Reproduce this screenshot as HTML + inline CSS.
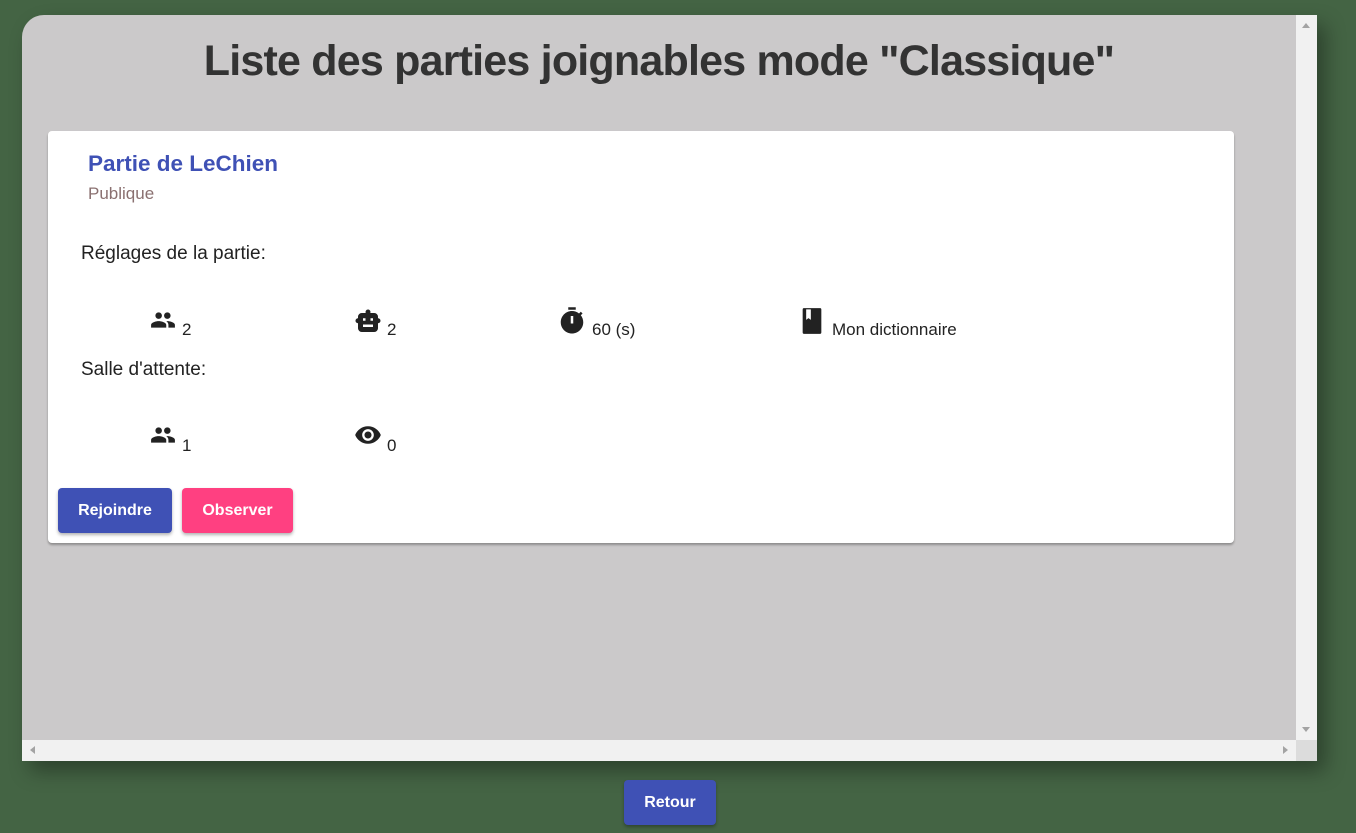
<!DOCTYPE html>
<html><head><meta charset="utf-8"><style>
*{box-sizing:border-box;margin:0;padding:0}
body{width:1356px;height:833px;background:#446444;font-family:"Liberation Sans",Roboto,sans-serif;position:relative;overflow:hidden}
.panel{position:absolute;left:22px;top:15px;width:1295px;height:746px;background:#cbc9ca;border-radius:22px 0 0 0;box-shadow:8px 10px 20px rgba(0,0,0,.35);overflow:hidden}
.vs{position:absolute;right:0;top:0;width:21px;height:725px;background:#f1f1f1}
.hs{position:absolute;left:0;bottom:0;width:1274px;height:21px;background:#f1f1f1}
.corner{position:absolute;right:0;bottom:0;width:21px;height:21px;background:#dcdcdc}
.tri{position:absolute;width:0;height:0}
h1{position:absolute;left:0;width:1274px;top:22px;text-align:center;font-size:43px;font-weight:bold;color:#333;letter-spacing:-0.8px}
.card{position:absolute;left:26px;top:116px;width:1186px;height:412px;background:#fff;border-radius:4px;box-shadow:0 2px 2px rgba(0,0,0,.3)}
.t{position:absolute;white-space:nowrap;color:#222}
.btn{position:absolute;height:45px;border-radius:4px;color:#fff;font-weight:bold;font-size:16px;display:flex;align-items:center;justify-content:center;box-shadow:0 2px 3px rgba(0,0,0,.3)}
svg{position:absolute}
</style></head><body>
<div class="panel">
<h1>Liste des parties joignables mode "Classique"</h1>
<div class="card">
<div class="t" style="left:40px;top:20px;font-size:22.5px;font-weight:bold;color:#3f51b5">Partie de LeChien</div>
<div class="t" style="left:40px;top:53px;font-size:17px;color:#8a7070">Publique</div>
<div class="t" style="left:33px;top:112px;font-size:19px">Réglages de la partie:</div>
<svg style="left:99px;top:176px" width="32" height="26" viewBox="0 0 24 24"><path fill="#222" d="M16 11c1.66 0 2.99-1.34 2.99-3S17.66 5 16 5c-1.66 0-3 1.34-3 3s1.34 3 3 3zm-8 0c1.66 0 2.99-1.34 2.99-3S9.66 5 8 5C6.34 5 5 6.34 5 8s1.34 3 3 3zm0 2c-2.33 0-7 1.17-7 3.5V19h14v-2.5c0-2.33-4.67-3.5-7-3.5zm8 0c-.29 0-.62.02-.97.05 1.16.84 1.97 1.97 1.97 3.45V19h6v-2.5c0-2.33-4.67-3.5-7-3.5z"/></svg>
<div class="t" style="left:134px;top:189px;font-size:17px">2</div>
<svg style="left:305px;top:176px" width="30" height="30" viewBox="0 0 24 24"><path fill="#222" d="M12 2a2 2 0 0 1 2 2c0 .3-.1.5-.2.8H17a3 3 0 0 1 3 3V9a2 2 0 0 1 0 4v4a3 3 0 0 1-3 3H7a3 3 0 0 1-3-3v-4a2 2 0 0 1 0-4V7.8a3 3 0 0 1 3-3h3.2A2 2 0 0 1 12 2zM8 9v2h2V9zm6 0v2h2V9zM8 14v2h8v-2z"/></svg>
<div class="t" style="left:339px;top:189px;font-size:17px">2</div>
<svg style="left:509px;top:175px" width="30" height="30" viewBox="0 0 24 24"><path fill="#222" d="M15 1H9v2h6V1zm4.03 6.39l1.42-1.42c-.43-.51-.9-.99-1.41-1.41l-1.42 1.42A8.96 8.96 0 0 0 12 4c-4.97 0-9 4.03-9 9s4.02 9 9 9 9-4.03 9-9c0-2.12-.74-4.07-1.97-5.61zM13 14h-2V8h2v6z"/></svg>
<div class="t" style="left:544px;top:189px;font-size:17px">60 (s)</div>
<svg style="left:752px;top:176px" width="24" height="28" viewBox="0 0 20 24"><path fill="#222" d="M3 1h14a1 1 0 0 1 1 1v20a1 1 0 0 1-1 1H3a1 1 0 0 1-1-1V2a1 1 0 0 1 1-1zm2 1v9l2-1.5 2 1.5V2z"/></svg>
<div class="t" style="left:784px;top:189px;font-size:17px">Mon dictionnaire</div>
<div class="t" style="left:33px;top:228px;font-size:19px">Salle d'attente:</div>
<svg style="left:99px;top:291px" width="32" height="26" viewBox="0 0 24 24"><path fill="#222" d="M16 11c1.66 0 2.99-1.34 2.99-3S17.66 5 16 5c-1.66 0-3 1.34-3 3s1.34 3 3 3zm-8 0c1.66 0 2.99-1.34 2.99-3S9.66 5 8 5C6.34 5 5 6.34 5 8s1.34 3 3 3zm0 2c-2.33 0-7 1.17-7 3.5V19h14v-2.5c0-2.33-4.67-3.5-7-3.5zm8 0c-.29 0-.62.02-.97.05 1.16.84 1.97 1.97 1.97 3.45V19h6v-2.5c0-2.33-4.67-3.5-7-3.5z"/></svg>
<div class="t" style="left:134px;top:305px;font-size:17px">1</div>
<svg style="left:304px;top:290px" width="32" height="28" viewBox="0 0 24 24"><path fill="#222" d="M12 4.5C7 4.5 2.73 7.61 1 12c1.73 4.39 6 7.5 11 7.5s9.27-3.11 11-7.5c-1.73-4.39-6-7.5-11-7.5zM12 17c-2.76 0-5-2.240-5-5s2.24-5 5-5 5 2.24 5 5-2.24 5-5 5zm0-8c-1.66 0-3 1.34-3 3s1.34 3 3 3 3-1.34 3-3-1.340-3-3-3z"/></svg>
<div class="t" style="left:339px;top:305px;font-size:17px">0</div>
<div class="btn" style="left:10px;top:357px;width:114px;background:#3f51b5">Rejoindre</div>
<div class="btn" style="left:134px;top:357px;width:111px;background:#ff4081">Observer</div>
</div>
<div class="vs"><div class="tri" style="left:6px;top:8px;border-left:4px solid transparent;border-right:4px solid transparent;border-bottom:5px solid #a3a3a3"></div><div class="tri" style="left:6px;bottom:8px;border-left:4px solid transparent;border-right:4px solid transparent;border-top:5px solid #a3a3a3"></div></div>
<div class="hs"><div class="tri" style="left:8px;top:6px;border-top:4px solid transparent;border-bottom:4px solid transparent;border-right:5px solid #a3a3a3"></div><div class="tri" style="right:8px;top:6px;border-top:4px solid transparent;border-bottom:4px solid transparent;border-left:5px solid #a3a3a3"></div></div>
<div class="corner"></div>
</div>
<div class="btn" style="left:624px;top:780px;width:92px;background:#3f51b5">Retour</div>
</body></html>
